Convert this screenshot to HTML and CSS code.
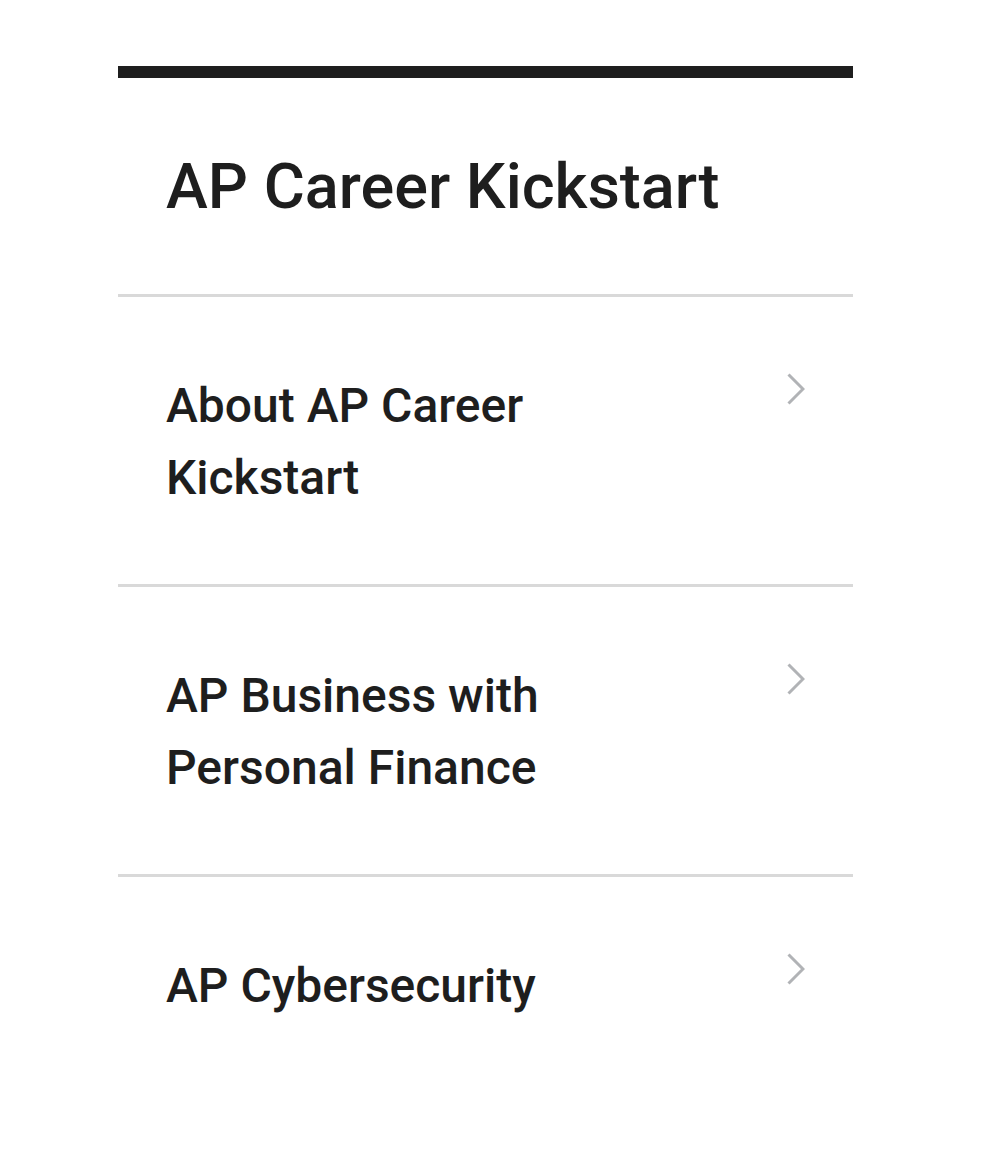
FILE: index.html
```html
<!DOCTYPE html>
<html lang="en">

<head>
    <meta charset="UTF-8">
    <meta name="viewport" content="width=device-width, initial-scale=1.0">
    <title>AP Career Kickstart</title>
    <link rel="stylesheet" href="styles.css">
</head>

<body>
    <nav class="side-nav">
        <h1 class="side-nav-title">AP Career Kickstart</h1>

        <ul class="side-nav-list">
            <li class="side-nav-item">
                <a href="#" class="side-nav-link">
                    <span class="side-nav-text">About AP Career Kickstart</span>
                    <svg class="chevron" width="18" height="32" viewBox="0 0 18 32" aria-hidden="true">
                        <polyline points="1.5,1.5 16,16 1.5,30.5" />
                    </svg>
                </a>
            </li>
            <li class="side-nav-item">
                <a href="#" class="side-nav-link">
                    <span class="side-nav-text">AP Business with Personal Finance</span>
                    <svg class="chevron" width="18" height="32" viewBox="0 0 18 32" aria-hidden="true">
                        <polyline points="1.5,1.5 16,16 1.5,30.5" />
                    </svg>
                </a>
            </li>
            <li class="side-nav-item">
                <a href="#" class="side-nav-link">
                    <span class="side-nav-text">AP Cybersecurity</span>
                    <svg class="chevron" width="18" height="32" viewBox="0 0 18 32" aria-hidden="true">
                        <polyline points="1.5,1.5 16,16 1.5,30.5" />
                    </svg>
                </a>
            </li>
        </ul>
    </nav>
</body>

</html>
```

FILE: styles.css
```css
body {
    margin: 0;
    font-family: Roboto, "Liberation Sans", sans-serif;
    color: #1e1e1e;
    background-color: #fff;
}

.side-nav {
    width: 735px;
    margin: 66px 0 0 118px;
    border-top: 12px solid #1e1e1e;
}

.side-nav-title {
    margin: 0;
    padding: 71px 48px 69px;
    font-size: 63px;
    font-weight: 500;
    line-height: 1.2;
    border-bottom: 3px solid #d9d9d9;
}

.side-nav-list {
    list-style: none;
    margin: 0;
    padding: 0;
}

.side-nav-item {
    border-bottom: 3px solid #d9d9d9;
}

.side-nav-item:last-child {
    border-bottom: none;
}

.side-nav-link {
    display: flex;
    justify-content: space-between;
    align-items: flex-start;
    min-height: 144px;
    padding: 73px 48px 70px;
    color: inherit;
    text-decoration: none;
}

.side-nav-text {
    max-width: 480px;
    font-size: 48px;
    font-weight: 500;
    line-height: 72px;
}

/* chevron on the right */
.chevron {
    flex-shrink: 0;
    margin-top: 3px;
    fill: none;
    stroke: #b1b3b6;
    stroke-width: 3;
}
```
